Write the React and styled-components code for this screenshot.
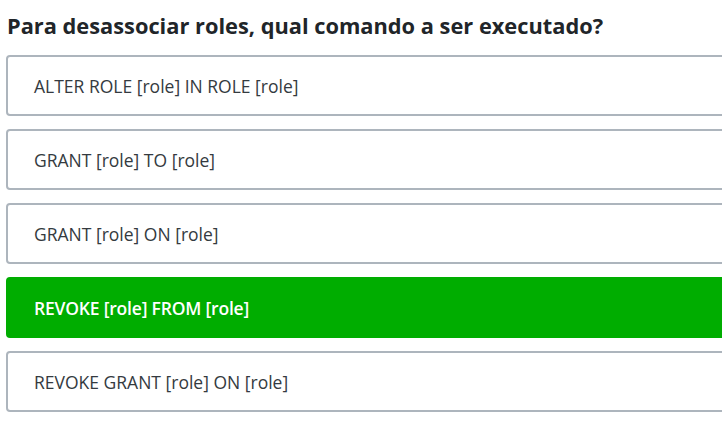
import React from 'react';
import styled, { createGlobalStyle } from 'styled-components';

const GlobalStyle = createGlobalStyle`
  body {
    margin: 0;
    background: #fff;
    font-family: "Open Sans", "Noto Sans", sans-serif;
    overflow: hidden;
  }
`;

const Page = styled.div`
  width: 722px;
  height: 426px;
  overflow: hidden;
  padding: 11px 0 0 6px;
  box-sizing: border-box;
`;

const Question = styled.h2`
  margin: 0 0 14px 1px;
  font-size: 21.8px;
  line-height: 30px;
  font-weight: 700;
  color: #212529;
`;

const Options = styled.div`
  display: flex;
  flex-direction: column;
  gap: 13px;
  width: 740px;
`;

const Option = styled.div`
  height: 61px;
  box-sizing: border-box;
  display: flex;
  align-items: center;
  padding: 1px 0 0 26px;
  border-radius: 4px;
  border: 2px solid ${(p) => (p.correct ? '#00ad00' : '#adb5bd')};
  background: ${(p) => (p.correct ? '#00ad00' : '#fff')};
  color: ${(p) => (p.correct ? '#fff' : '#343a40')};
  font-size: 17.5px;
  font-weight: ${(p) => (p.correct ? 600 : 400)};
  letter-spacing: ${(p) => (p.correct ? '-0.2px' : '0')};
`;

const options = [
  { text: 'ALTER ROLE [role] IN ROLE [role]' },
  { text: 'GRANT [role] TO [role]' },
  { text: 'GRANT [role] ON [role]' },
  { text: 'REVOKE [role] FROM [role]', correct: true },
  { text: 'REVOKE GRANT [role] ON [role]' },
];

const App = () => (
  <Page>
    <GlobalStyle />
    <Question>Para desassociar roles, qual comando a ser executado?</Question>
    <Options>
      {options.map((o) => (
        <Option key={o.text} correct={o.correct}>
          {o.text}
        </Option>
      ))}
    </Options>
  </Page>
);

export default App;
